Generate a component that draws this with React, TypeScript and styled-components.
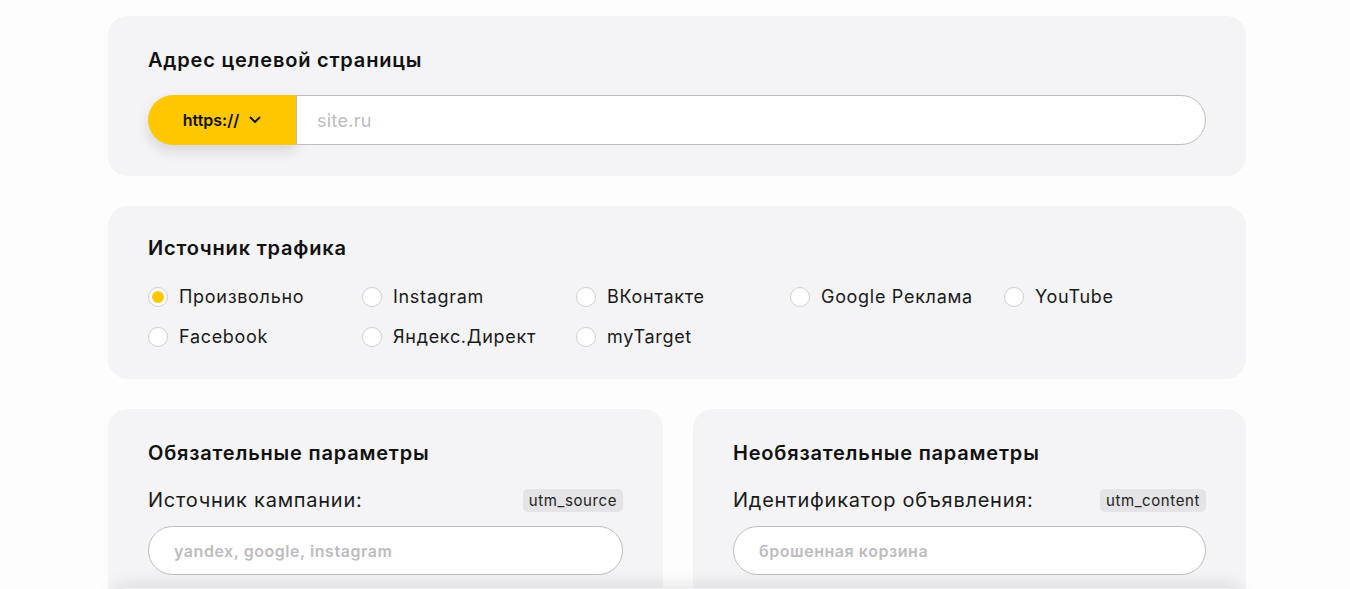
import React, { useState } from "react";
import styled, { createGlobalStyle } from "styled-components";

const GlobalStyle = createGlobalStyle`
  body {
    margin: 0;
    background: #fdfdfd;
    font-family: "Inter", "Noto Sans", sans-serif;
    color: #111;
  }
`;

const Page = styled.div`
  width: 1138px;
  margin: 0 0 0 108px;
  padding: 16px 0 40px;
  display: flex;
  flex-direction: column;
  gap: 30px;
`;

const Card = styled.section`
  background: #f4f3f5;
  border-radius: 20px;
  padding: 32px 40px 30px;
`;

const SourceCard = styled(Card)`
  padding-top: 30px;
`;

const Title = styled.h2`
  margin: 0 0 23px;
  font-size: 20px;
  font-weight: 600;
  line-height: 24px;
  letter-spacing: 0.8px;
`;

const UrlGroup = styled.div`
  display: flex;
  height: 50px;
  margin-bottom: 1px;
`;

const Protocol = styled.button`
  width: 148px;
  flex: none;
  border: none;
  border-radius: 25px 0 0 25px;
  background: #ffc700;
  box-shadow: 0 6px 14px rgba(0, 0, 0, 0.12);
  font-family: inherit;
  font-size: 16px;
  font-weight: 600;
  color: #111;
  display: flex;
  align-items: center;
  justify-content: center;
  gap: 10px;
  cursor: pointer;
`;

const TextInput = styled.input<{ $rounded?: "right" | "all" }>`
  flex: ${(p) => (p.$rounded === "right" ? 1 : "none")};
  min-width: 0;
  box-sizing: border-box;
  height: ${(p) => (p.$rounded === "right" ? "50px" : "49px")};
  border: 1px solid #bdbcbe;
  border-radius: ${(p) => (p.$rounded === "right" ? "0 25px 25px 0" : "25px")};
  background: #fff;
  padding: 0 ${(p) => (p.$rounded === "right" ? "20px" : "25px")};
  font-family: inherit;
  font-size: ${(p) => (p.$rounded === "right" ? "18px" : "16px")};
  font-weight: ${(p) => (p.$rounded === "right" ? 400 : 600)};
  letter-spacing: ${(p) => (p.$rounded === "right" ? "0.3px" : "0.55px")};
  outline: none;
  &::placeholder {
    color: #bdbcbe;
  }
`;

const RadioGrid = styled.div`
  display: grid;
  grid-template-columns: repeat(5, 214px);
  row-gap: 20px;
  padding: 4px 0 2px;
`;

const RadioItem = styled.label`
  display: flex;
  align-items: center;
  gap: 11px;
  font-size: 18px;
  line-height: 20px;
  letter-spacing: 0.7px;
  color: #1a1a1a;
  cursor: pointer;
`;

const RadioDot = styled.span<{ $checked: boolean }>`
  width: 20px;
  height: 20px;
  flex: none;
  box-sizing: border-box;
  border-radius: 50%;
  border: 1px solid #cfcfd1;
  background: #fff;
  display: flex;
  align-items: center;
  justify-content: center;
  &::after {
    content: "";
    width: 12px;
    height: 12px;
    border-radius: 50%;
    background: ${(p) => (p.$checked ? "#ffc700" : "transparent")};
  }
`;

const Columns = styled.div`
  display: grid;
  grid-template-columns: 555px 553px;
  gap: 30px;
`;

const ParamHead = styled.div`
  display: flex;
  align-items: center;
  justify-content: space-between;
  margin-bottom: 14px;
  height: 24px;
`;

const ParamLabel = styled.span`
  font-size: 20px;
  letter-spacing: 0.75px;
  color: #1a1a1a;
`;

const Tag = styled.span`
  background: #e4e3e5;
  border-radius: 5px;
  padding: 0 6px;
  height: 23px;
  line-height: 23px;
  font-size: 15px;
  letter-spacing: 0.6px;
  color: #222;
`;

const ParamCard = styled(Card)`
  display: flex;
  flex-direction: column;
  min-height: 220px;
`;

const BottomBar = styled.div`
  position: fixed;
  left: 108px;
  right: 104px;
  top: 588px;
  height: 80px;
  background: #f4f3f5;
  border-radius: 20px 20px 0 0;
  box-shadow: 0 -6px 16px rgba(0, 0, 0, 0.08);
`;

const sources = [
  "Произвольно",
  "Instagram",
  "ВКонтакте",
  "Google Реклама",
  "YouTube",
  "Facebook",
  "Яндекс.Директ",
  "myTarget",
];

const Chevron = () => (
  <svg width="12" height="8" viewBox="0 0 12 8" fill="none">
    <path d="M1.5 1.5L6 6l4.5-4.5" stroke="#111" strokeWidth="1.8" strokeLinecap="round" strokeLinejoin="round" />
  </svg>
);

const App = () => {
  const [source, setSource] = useState("Произвольно");

  return (
    <>
      <GlobalStyle />
      <Page>
        <Card>
          <Title>Адрес целевой страницы</Title>
          <UrlGroup>
            <Protocol>
              https:// <Chevron />
            </Protocol>
            <TextInput $rounded="right" placeholder="site.ru" />
          </UrlGroup>
        </Card>

        <SourceCard>
          <Title>Источник трафика</Title>
          <RadioGrid>
            {sources.map((s) => (
              <RadioItem key={s} onClick={() => setSource(s)}>
                <RadioDot $checked={source === s} />
                {s}
              </RadioItem>
            ))}
          </RadioGrid>
        </SourceCard>

        <Columns>
          <ParamCard>
            <Title>Обязательные параметры</Title>
            <ParamHead>
              <ParamLabel>Источник кампании:</ParamLabel>
              <Tag>utm_source</Tag>
            </ParamHead>
            <TextInput $rounded="all" placeholder="yandex, google, instagram" />
          </ParamCard>
          <ParamCard>
            <Title>Необязательные параметры</Title>
            <ParamHead>
              <ParamLabel>Идентификатор объявления:</ParamLabel>
              <Tag>utm_content</Tag>
            </ParamHead>
            <TextInput $rounded="all" placeholder="брошенная корзина" />
          </ParamCard>
        </Columns>
      </Page>
      <BottomBar />
    </>
  );
};

export default App;
